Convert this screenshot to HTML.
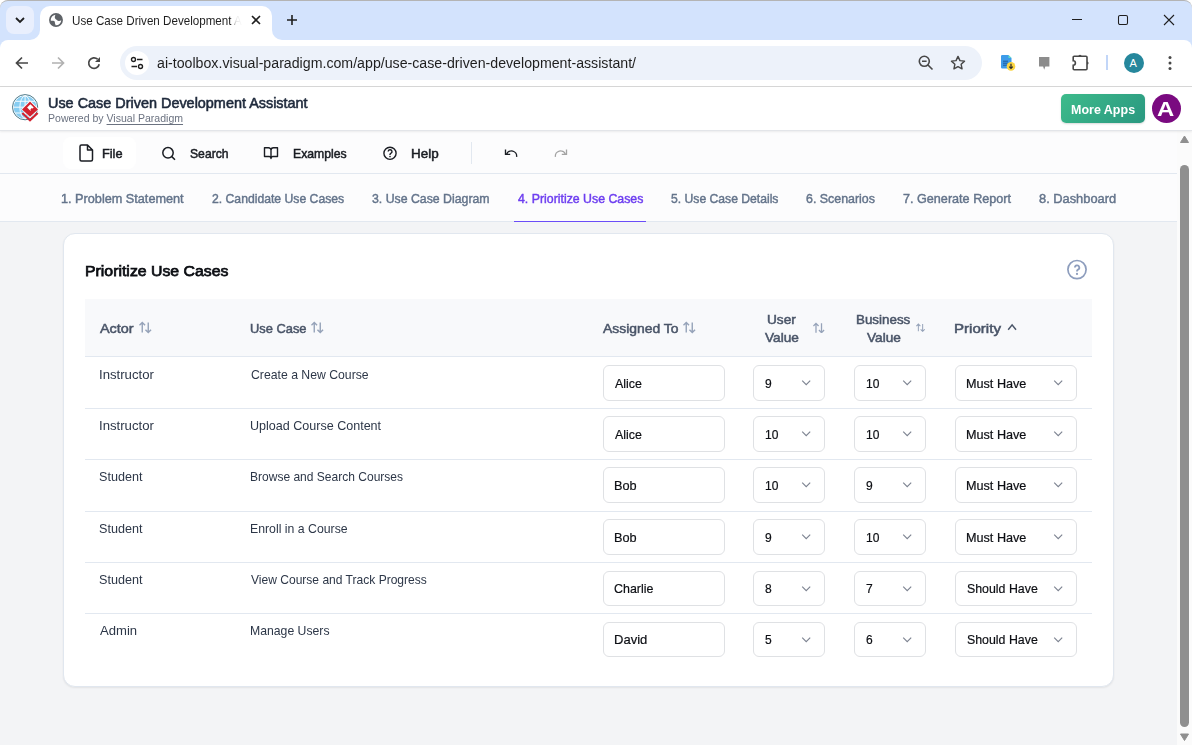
<!DOCTYPE html>
<html><head><meta charset="utf-8">
<style>
*{box-sizing:border-box;margin:0;padding:0}
html,body{width:1192px;height:745px;overflow:hidden;background:#fff;font-family:"Liberation Sans",sans-serif}
svg{display:block;position:absolute}
.t{position:absolute;white-space:nowrap;line-height:1}
.b{position:absolute}
.med{-webkit-text-stroke:0.25px currentColor}
</style></head>
<body>

<div class="b" style="left:0;top:0;width:1192px;height:50px;background:#d3e3fd;border-top:1px solid #b4b4b4;border-radius:8px 8px 0 0"></div>
<div class="b" style="left:40px;top:6px;width:232px;height:35px;background:#fff;border-radius:10px 10px 0 0"></div>
<svg style="left:49px;top:12.8px" width="14" height="14" viewBox="0 0 14 14"><g fill="#5f6368"><path d="M6.6 0.9C6.3 2.3 5.7 3.5 5.8 4.6 6 6 7.4 6.6 8.4 7.6 9.3 8.4 10.6 8 13.1 7A6.1 6.1 0 0 0 6.6 0.9z"/><path d="M0.95 8.2C2 7.6 4.3 7.6 5.4 8.2 6.3 8.8 5.6 10.1 6.2 11 6.8 11.8 6.4 12.5 6.2 13.05A6.1 6.1 0 0 1 0.95 8.2z"/></g><circle cx="7" cy="7" r="6.1" fill="none" stroke="#5f6368" stroke-width="1.7"/></svg>
<div class="t " style="left:71.93px;top:15px;font-size:12.6px;color:#1f1f1f;transform:scaleX(0.9225);transform-origin:0 0;width:216.8px;overflow:hidden;-webkit-mask-image:linear-gradient(to right,#000 172.4px,rgba(0,0,0,0.12) 177.8px,transparent 185.4px)">Use Case Driven Development A</div>
<svg style="left:250px;top:14px" width="12" height="12" viewBox="0 0 12 12"><path d="M2 2l8 8M10 2l-8 8" stroke="#1f1f1f" stroke-width="1.6"/></svg>
<svg style="left:286px;top:14px" width="12" height="12" viewBox="0 0 12 12"><path d="M6 1v10M1 6h10" stroke="#1f1f1f" stroke-width="1.6"/></svg>
<svg style="left:1070px;top:12px" width="14" height="14" viewBox="0 0 14 14"><path d="M2 7.5h10" stroke="#1f1f1f" stroke-width="1"/></svg>
<svg style="left:1116px;top:13px" width="14" height="14" viewBox="0 0 14 14"><rect x="2.5" y="2.5" width="9" height="9" rx="1.5" fill="none" stroke="#1f1f1f" stroke-width="1.05"/></svg>
<svg style="left:1162px;top:13px" width="14" height="14" viewBox="0 0 14 14"><path d="M2 2l10 10M12 2L2 12" stroke="#1f1f1f" stroke-width="1.1"/></svg>
<div class="b" style="left:0;top:40px;width:1192px;height:47px;background:#fff;border-bottom:1px solid #d7d7d7;border-radius:8px 8px 0 0"></div>
<div class="b" style="left:30px;top:30px;width:10px;height:10px;background:#fff"></div>
<div class="b" style="left:30px;top:30px;width:10px;height:10px;background:#d3e3fd;border-bottom-right-radius:10px"></div>
<div class="b" style="left:272px;top:30px;width:10px;height:10px;background:#fff"></div>
<div class="b" style="left:272px;top:30px;width:10px;height:10px;background:#d3e3fd;border-bottom-left-radius:10px"></div>
<div class="b" style="left:40px;top:36px;width:232px;height:6px;background:#fff"></div>
<div class="b" style="left:6px;top:6px;width:28px;height:28px;background:#e9effd;border-radius:8px"></div>
<svg style="left:14px;top:15px" width="12" height="10" viewBox="0 0 12 10"><path d="M2 3l4 4 4-4" fill="none" stroke="#1f1f1f" stroke-width="1.8"/></svg>
<svg style="left:14px;top:55px" width="16" height="16" viewBox="0 0 16 16"><path d="M14 8H3M8 2.5L2.5 8 8 13.5" fill="none" stroke="#474747" stroke-width="1.7"/></svg>
<svg style="left:50px;top:55px" width="16" height="16" viewBox="0 0 16 16"><path d="M2 8h11M8 2.5L13.5 8 8 13.5" fill="none" stroke="#b1b1b1" stroke-width="1.7"/></svg>
<svg style="left:86px;top:55px" width="16" height="16" viewBox="0 0 16 16"><path d="M13.2 9.2A5.3 5.3 0 1 1 11.6 4.2" fill="none" stroke="#474747" stroke-width="1.7"/><path d="M14 2v5h-5z" fill="#474747"/></svg>
<div class="b" style="left:120px;top:46px;width:862px;height:34px;border-radius:17px;background:#edf2fa"></div>
<div class="b" style="left:125px;top:51px;width:24px;height:24px;border-radius:12px;background:#fff"></div>
<svg style="left:130px;top:56px" width="14" height="14" viewBox="0 0 14 14"><circle cx="3.5" cy="3.5" r="2" fill="none" stroke="#1f1f1f" stroke-width="1.4"/><path d="M7 3.5h5.5M1.5 10.5H7" stroke="#1f1f1f" stroke-width="1.4"/><circle cx="10.5" cy="10.5" r="2" fill="none" stroke="#1f1f1f" stroke-width="1.4"/></svg>
<div class="t " style="left:156.83px;top:56px;font-size:14px;color:#1f1f1f;transform:scaleX(1.0125);transform-origin:0 0;">ai-toolbox.visual-paradigm.com/app/use-case-driven-development-assistant/</div>
<svg style="left:917px;top:54px" width="18" height="18" viewBox="0 0 18 18"><circle cx="7.3" cy="7.3" r="5" fill="none" stroke="#474747" stroke-width="1.6"/><path d="M5 7.3h4.6M11 11l4.5 4.5" stroke="#474747" stroke-width="1.6"/></svg>
<svg style="left:949px;top:54px" width="18" height="18" viewBox="0 0 24 24"><path d="M12 3.2l2.6 5.6 6.1.7-4.5 4.2 1.2 6.1L12 16.8l-5.4 3 1.2-6.1-4.5-4.2 6.1-.7z" fill="none" stroke="#474747" stroke-width="1.9" stroke-linejoin="round"/></svg>
<svg style="left:1000px;top:54px" width="17" height="18" viewBox="0 0 17 18"><path d="M2.2 1h6.3l3 3v9.3a1.2 1.2 0 0 1-1.2 1.2H2.2A1.2 1.2 0 0 1 1 13.3V2.2A1.2 1.2 0 0 1 2.2 1z" fill="#3d9be9"/><path d="M8.5 1l3 3h-3z" fill="#5fe0c6"/><path d="M3 7.2h5M3 9.2h5M3 11.2h4" stroke="#1c5a9e" stroke-width="1"/><circle cx="11" cy="12.4" r="4.3" fill="#fbd542"/><path d="M11 9.8v4.4M9.2 12.6l1.8 1.8 1.8-1.8" fill="none" stroke="#2b2b2b" stroke-width="1.2"/></svg>
<svg style="left:1038px;top:56px" width="13" height="15" viewBox="0 0 13 15"><path d="M1 1.1h10.4v9.3H7.3L6.2 13.7 5.1 10.4H1z" fill="#8c8c8c"/></svg>
<svg style="left:1071px;top:53px" width="20" height="19" viewBox="0 0 20 19"><path d="M3.2 3.3H15a1 1 0 0 1 1 1V15.7a1 1 0 0 1-1 1H3.2a1 1 0 0 1-1-1V12.2a2.2 2.2 0 0 0 0-4.4V4.3a1 1 0 0 1 1-1z" fill="none" stroke="#474747" stroke-width="1.6"/><path d="M7.4 3.3a1.6 1.6 0 0 1 3.2 0z" fill="#474747"/><path d="M16 8.4a1.6 1.6 0 0 1 0 3.2z" fill="#474747"/></svg>
<div class="b" style="left:1106px;top:55px;width:2px;height:15px;background:#c2d6f8"></div>
<div class="b" style="left:1124px;top:53px;width:20px;height:20px;border-radius:10px;background:#26879c"></div>
<div class="t " style="left:1129.50px;top:58px;font-size:11px;color:#fff;">A</div>
<svg style="left:1166px;top:54px" width="8" height="18" viewBox="0 0 8 18"><circle cx="4" cy="3.4" r="1.5" fill="#474747"/><circle cx="4" cy="9" r="1.5" fill="#474747"/><circle cx="4" cy="14.5" r="1.5" fill="#474747"/></svg>
<div class="b" style="left:0;top:87px;width:1192px;height:44px;background:#fff;border-bottom:1px solid #e3e5e9;box-shadow:0 1px 2px rgba(0,0,0,0.07);z-index:3"></div>
<svg style="left:11px;top:93px;z-index:4" width="30" height="31" viewBox="0 0 30 31">
<circle cx="14.1" cy="14.2" r="12.6" fill="#fff" stroke="#4b7888" stroke-width="1"/>
<circle cx="14.1" cy="14.2" r="11.3" fill="#86cdf2"/>
<path d="M2.8 14.2h22.6M4.2 8.3h19.8M4.2 20h19.8M14.1 2.9v22.6" stroke="#f4fbff" stroke-width="1"/>
<ellipse cx="14.1" cy="14.2" rx="5.2" ry="11.3" fill="none" stroke="#f4fbff" stroke-width="1"/>
<path d="M19 7.3l9 9-9 8.5-9-8.5z" fill="#fff"/>
<path d="M19 8.5l8 7.9-8 7.4-8-7.4z" fill="#d3222f"/>
<path d="M19.4 11.2l3.3 3.3-3.3 3.3-3.3-3.3z" fill="#fff"/>
<path d="M20.9 14.9l1.7 1.6-1.7 1.6-1.6-1.6z" fill="#d3222f"/>
<path d="M11.3 20l7.7 7.2 7.7-7.2" fill="none" stroke="#d3222f" stroke-width="2.1"/>
</svg>
<div class="t " style="left:47.62px;top:97px;font-size:13.9px;color:#1e293b;transform:scaleX(1.0379);transform-origin:0 0;-webkit-text-stroke:0.55px #1e293b;z-index:4">Use Case Driven Development Assistant</div>
<div class="t " style="left:47.86px;top:113px;font-size:10.6px;color:#6b7280;transform:scaleX(0.9940);transform-origin:0 0;z-index:4">Powered by <span style="text-decoration:underline;text-underline-offset:1.5px">Visual Paradigm</span></div>
<div class="b" style="left:1061px;top:94px;width:84px;height:29px;border-radius:5px;background:linear-gradient(135deg,#3dbb8b,#2a9880);box-shadow:0 1px 2px rgba(0,0,0,0.15);z-index:4"></div>
<div class="t " style="left:1071.19px;top:104px;font-size:12.6px;color:#fff;font-weight:bold;transform:scaleX(0.9919);transform-origin:0 0;z-index:4">More Apps</div>
<div class="b" style="left:1152px;top:94px;width:29px;height:29px;border-radius:50%;background:#7a0a80;z-index:4"></div>
<div class="t " style="left:1157.40px;top:100px;font-size:19.5px;color:#fff;font-weight:bold;transform:scaleX(1.2246);transform-origin:0 0;z-index:4">A</div>
<div class="b" style="left:0;top:131px;width:1192px;height:614px;background:#f3f4f6"></div>
<div class="b" style="left:0;top:131px;width:1177px;height:43px;background:#fcfcfd;border-bottom:1px solid #e2e8f0"></div>
<div class="b" style="left:63px;top:137px;width:73px;height:32px;background:#fff;border-radius:8px"></div>
<svg style="left:78px;top:144px" width="16" height="18" viewBox="0 0 16 18"><path d="M2 2.5a1.5 1.5 0 0 1 1.5-1.5H9.5L14.5 6v9.5a1.5 1.5 0 0 1-1.5 1.5H3.5A1.5 1.5 0 0 1 2 15.5z M9.5 1v5h5" fill="none" stroke="#1a1d23" stroke-width="1.5" stroke-linejoin="round"/></svg>
<div class="t " style="left:102.28px;top:148px;font-size:12.8px;color:#1a1d23;transform:scaleX(0.9962);transform-origin:0 0;-webkit-text-stroke:0.5px #1a1d23;">File</div>
<svg style="left:161px;top:146px" width="16" height="15" viewBox="0 0 16 15"><circle cx="7" cy="6.8" r="5.2" fill="none" stroke="#1a1d23" stroke-width="1.5"/><path d="M10.8 10.6l3.2 3.2" stroke="#1a1d23" stroke-width="1.5"/></svg>
<div class="t " style="left:190.35px;top:148px;font-size:12.8px;color:#1a1d23;transform:scaleX(0.9513);transform-origin:0 0;-webkit-text-stroke:0.5px #1a1d23;">Search</div>
<svg style="left:263px;top:146px" width="16" height="14" viewBox="0 0 16 14"><path d="M1.5 1.8h4a2.5 2.5 0 0 1 2.5 2.5v8.2a2 2 0 0 0-2-2h-4.5z M14.5 1.8h-4a2.5 2.5 0 0 0-2.5 2.5v8.2a2 2 0 0 1 2-2h4.5z" fill="none" stroke="#1a1d23" stroke-width="1.4" stroke-linejoin="round"/></svg>
<div class="t " style="left:293.02px;top:148px;font-size:12.8px;color:#1a1d23;transform:scaleX(0.9558);transform-origin:0 0;-webkit-text-stroke:0.5px #1a1d23;">Examples</div>
<svg style="left:382px;top:146px" width="16" height="15" viewBox="0 0 16 15"><circle cx="8" cy="7.3" r="6.1" fill="none" stroke="#1a1d23" stroke-width="1.4"/><path d="M6.2 5.6a1.9 1.9 0 1 1 2.6 1.8c-.5.2-.8.6-.8 1.1v.6" fill="none" stroke="#1a1d23" stroke-width="1.4"/><circle cx="8" cy="10.6" r="0.8" fill="#1a1d23"/></svg>
<div class="t " style="left:410.93px;top:148px;font-size:12.8px;color:#1a1d23;transform:scaleX(1.0497);transform-origin:0 0;-webkit-text-stroke:0.5px #1a1d23;">Help</div>
<div class="b" style="left:471px;top:142px;width:1px;height:22px;background:#e2e8f0"></div>
<svg style="left:503px;top:146px" width="16" height="14" viewBox="0 0 16 14"><path d="M3.6 8.2a5.2 5.2 0 0 1 10 2.6" fill="none" stroke="#1a1d23" stroke-width="1.35"/><path d="M2.5 3.6v4.7h4.7" fill="none" stroke="#1a1d23" stroke-width="1.35"/></svg>
<svg style="left:553px;top:146px" width="16" height="14" viewBox="0 0 16 14"><path d="M12.4 8.2a5.2 5.2 0 0 0-10 2.6" fill="none" stroke="#a3a3a3" stroke-width="1.3"/><path d="M13.5 3.6v4.7H8.8" fill="none" stroke="#a3a3a3" stroke-width="1.3"/></svg>
<div class="b" style="left:0;top:174px;width:1177px;height:48px;background:#fcfcfd;border-bottom:1px solid #e2e8f0"></div>
<div class="t " style="left:60.55px;top:192px;font-size:13px;color:#64748b;transform:scaleX(0.9754);transform-origin:0 0;-webkit-text-stroke:0.45px #64748b;">1. Problem Statement</div>
<div class="t " style="left:211.69px;top:192px;font-size:13px;color:#64748b;transform:scaleX(0.9377);transform-origin:0 0;-webkit-text-stroke:0.45px #64748b;">2. Candidate Use Cases</div>
<div class="t " style="left:372.11px;top:192px;font-size:13px;color:#64748b;transform:scaleX(0.9462);transform-origin:0 0;-webkit-text-stroke:0.45px #64748b;">3. Use Case Diagram</div>
<div class="t " style="left:517.75px;top:192px;font-size:13px;color:#6d3ef0;transform:scaleX(0.9483);transform-origin:0 0;-webkit-text-stroke:0.45px #6d3ef0;">4. Prioritize Use Cases</div>
<div class="t " style="left:671.31px;top:192px;font-size:13px;color:#64748b;transform:scaleX(0.9352);transform-origin:0 0;-webkit-text-stroke:0.45px #64748b;">5. Use Case Details</div>
<div class="t " style="left:806.38px;top:192px;font-size:13px;color:#64748b;transform:scaleX(0.9540);transform-origin:0 0;-webkit-text-stroke:0.45px #64748b;">6. Scenarios</div>
<div class="t " style="left:903.07px;top:192px;font-size:13px;color:#64748b;transform:scaleX(0.9705);transform-origin:0 0;-webkit-text-stroke:0.45px #64748b;">7. Generate Report</div>
<div class="t " style="left:1039.12px;top:192px;font-size:13px;color:#64748b;transform:scaleX(0.9878);transform-origin:0 0;-webkit-text-stroke:0.45px #64748b;">8. Dashboard</div>
<div class="b" style="left:514px;top:221px;width:132px;height:1px;background:#6a4cf8"></div>
<div class="b" style="left:63px;top:233px;width:1051px;height:454px;background:#fff;border:1px solid #e1e7ef;border-radius:12px;box-shadow:0 1px 2px rgba(0,0,0,0.07)"></div>
<div class="t " style="left:84.73px;top:263px;font-size:15.2px;color:#0b0d12;transform:scaleX(1.0429);transform-origin:0 0;-webkit-text-stroke:0.75px #0b0d12;">Prioritize Use Cases</div>
<svg style="left:1066px;top:259px" width="22" height="22" viewBox="0 0 22 22"><circle cx="11" cy="10.6" r="9.1" fill="none" stroke="#8d9dbd" stroke-width="1.7"/><path d="M8.9 8.6a2.2 2.2 0 1 1 3.1 2c-.6.3-1 .7-1 1.3v.6" fill="none" stroke="#8d9dbd" stroke-width="1.8"/><circle cx="11" cy="14.9" r="1.1" fill="#8d9dbd"/></svg>
<div class="b" style="left:85px;top:299px;width:1007px;height:58px;background:#f8f9fb;border-bottom:1px solid #e2e8f0"></div>
<div class="t " style="left:100.00px;top:323px;font-size:12.8px;color:#4a5568;transform:scaleX(1.1272);transform-origin:0 0;-webkit-text-stroke:0.5px #4a5568;">Actor</div>
<svg style="left:139px;top:321px" width="12.50" height="12.50" viewBox="0 0 12.5 12.5"><path d="M3.25 11.6V1.4M0.45 4.3l2.8-2.85 2.8 2.85M9.25 1.4v10.2M6.45 8.75l2.8 2.85 2.8-2.85" fill="none" stroke="#96a3b9" stroke-width="1.4"/></svg>
<div class="t " style="left:250.24px;top:323px;font-size:12.8px;color:#4a5568;transform:scaleX(1.0051);transform-origin:0 0;-webkit-text-stroke:0.5px #4a5568;">Use Case</div>
<svg style="left:311px;top:321px" width="12.50" height="12.50" viewBox="0 0 12.5 12.5"><path d="M3.25 11.6V1.4M0.45 4.3l2.8-2.85 2.8 2.85M9.25 1.4v10.2M6.45 8.75l2.8 2.85 2.8-2.85" fill="none" stroke="#96a3b9" stroke-width="1.4"/></svg>
<div class="t " style="left:602.70px;top:323px;font-size:12.8px;color:#4a5568;transform:scaleX(1.0856);transform-origin:0 0;-webkit-text-stroke:0.5px #4a5568;">Assigned To</div>
<svg style="left:683px;top:321px" width="12.50" height="12.50" viewBox="0 0 12.5 12.5"><path d="M3.25 11.6V1.4M0.45 4.3l2.8-2.85 2.8 2.85M9.25 1.4v10.2M6.45 8.75l2.8 2.85 2.8-2.85" fill="none" stroke="#96a3b9" stroke-width="1.4"/></svg>
<div class="t " style="left:766.68px;top:314px;font-size:12.8px;color:#4a5568;transform:scaleX(1.0675);transform-origin:0 0;-webkit-text-stroke:0.5px #4a5568;">User</div>
<div class="t " style="left:765.03px;top:332px;font-size:12.8px;color:#4a5568;transform:scaleX(1.0652);transform-origin:0 0;-webkit-text-stroke:0.5px #4a5568;">Value</div>
<svg style="left:813px;top:321.5px" width="11.50" height="11.50" viewBox="0 0 12.5 12.5"><path d="M3.25 11.6V1.4M0.45 4.3l2.8-2.85 2.8 2.85M9.25 1.4v10.2M6.45 8.75l2.8 2.85 2.8-2.85" fill="none" stroke="#96a3b9" stroke-width="1.4"/></svg>
<div class="t " style="left:856.33px;top:314px;font-size:12.8px;color:#4a5568;transform:scaleX(1.0456);transform-origin:0 0;-webkit-text-stroke:0.5px #4a5568;">Business</div>
<div class="t " style="left:867.23px;top:332px;font-size:12.8px;color:#4a5568;transform:scaleX(1.0652);transform-origin:0 0;-webkit-text-stroke:0.5px #4a5568;">Value</div>
<svg style="left:916px;top:322.5px" width="9.00" height="9.00" viewBox="0 0 12.5 12.5"><path d="M3.25 11.6V1.4M0.45 4.3l2.8-2.85 2.8 2.85M9.25 1.4v10.2M6.45 8.75l2.8 2.85 2.8-2.85" fill="none" stroke="#96a3b9" stroke-width="1.4"/></svg>
<div class="t " style="left:954.29px;top:323px;font-size:12.8px;color:#4a5568;transform:scaleX(1.1783);transform-origin:0 0;-webkit-text-stroke:0.5px #4a5568;">Priority</div>
<svg style="left:1006px;top:321px" width="12" height="12" viewBox="0 0 12 12"><path d="M2.2 8.8l3.9-4.9 3.9 4.9" fill="none" stroke="#4a5568" stroke-width="1.5"/></svg>
<div class="t " style="left:98.81px;top:369px;font-size:12.8px;color:#2d3748;transform:scaleX(1.0295);transform-origin:0 0;">Instructor</div>
<div class="t " style="left:250.59px;top:369px;font-size:12.8px;color:#2d3748;transform:scaleX(0.9564);transform-origin:0 0;">Create a New Course</div>
<div class="b" style="left:603px;top:365.00px;width:122px;height:35.6px;border:1px solid #dfe1e4;border-radius:6px;background:#fff"></div>
<div class="t " style="left:614.70px;top:378px;font-size:12.8px;color:#0d0f14;transform:scaleX(0.9669);transform-origin:0 0;-webkit-text-stroke:0.2px #0d0f14;">Alice</div>
<div class="b" style="left:753px;top:365.00px;width:72px;height:35.6px;border:1px solid #dfe1e4;border-radius:6px;background:#fff"></div>
<div class="t " style="left:764.96px;top:378px;font-size:12.8px;color:#0d0f14;transform:scaleX(0.9400);transform-origin:0 0;-webkit-text-stroke:0.2px #0d0f14;">9</div>
<svg style="left:800px;top:379.00px" width="12" height="8" viewBox="0 0 12 8"><path d="M2.2 1.6l4 4 4-4" fill="none" stroke="#7d8391" stroke-width="1.15"/></svg>
<div class="b" style="left:854px;top:365.00px;width:72px;height:35.6px;border:1px solid #dfe1e4;border-radius:6px;background:#fff"></div>
<div class="t " style="left:865.60px;top:378px;font-size:12.8px;color:#0d0f14;transform:scaleX(0.9400);transform-origin:0 0;-webkit-text-stroke:0.2px #0d0f14;">10</div>
<svg style="left:901px;top:379.00px" width="12" height="8" viewBox="0 0 12 8"><path d="M2.2 1.6l4 4 4-4" fill="none" stroke="#7d8391" stroke-width="1.15"/></svg>
<div class="b" style="left:955px;top:365.00px;width:122px;height:35.6px;border:1px solid #dfe1e4;border-radius:6px;background:#fff"></div>
<div class="t " style="left:966.49px;top:378px;font-size:12.8px;color:#0d0f14;transform:scaleX(0.9875);transform-origin:0 0;-webkit-text-stroke:0.2px #0d0f14;">Must Have</div>
<svg style="left:1052px;top:379.00px" width="12" height="8" viewBox="0 0 12 8"><path d="M2.2 1.6l4 4 4-4" fill="none" stroke="#7d8391" stroke-width="1.15"/></svg>
<div class="b" style="left:85px;top:408.30px;width:1007px;height:1px;background:#e2e8f0"></div>
<div class="t " style="left:98.81px;top:420px;font-size:12.8px;color:#2d3748;transform:scaleX(1.0295);transform-origin:0 0;">Instructor</div>
<div class="t " style="left:250.26px;top:420px;font-size:12.8px;color:#2d3748;transform:scaleX(0.9801);transform-origin:0 0;">Upload Course Content</div>
<div class="b" style="left:603px;top:416.20px;width:122px;height:35.6px;border:1px solid #dfe1e4;border-radius:6px;background:#fff"></div>
<div class="t " style="left:614.70px;top:429px;font-size:12.8px;color:#0d0f14;transform:scaleX(0.9669);transform-origin:0 0;-webkit-text-stroke:0.2px #0d0f14;">Alice</div>
<div class="b" style="left:753px;top:416.20px;width:72px;height:35.6px;border:1px solid #dfe1e4;border-radius:6px;background:#fff"></div>
<div class="t " style="left:764.60px;top:429px;font-size:12.8px;color:#0d0f14;transform:scaleX(0.9400);transform-origin:0 0;-webkit-text-stroke:0.2px #0d0f14;">10</div>
<svg style="left:800px;top:430.20px" width="12" height="8" viewBox="0 0 12 8"><path d="M2.2 1.6l4 4 4-4" fill="none" stroke="#7d8391" stroke-width="1.15"/></svg>
<div class="b" style="left:854px;top:416.20px;width:72px;height:35.6px;border:1px solid #dfe1e4;border-radius:6px;background:#fff"></div>
<div class="t " style="left:865.60px;top:429px;font-size:12.8px;color:#0d0f14;transform:scaleX(0.9400);transform-origin:0 0;-webkit-text-stroke:0.2px #0d0f14;">10</div>
<svg style="left:901px;top:430.20px" width="12" height="8" viewBox="0 0 12 8"><path d="M2.2 1.6l4 4 4-4" fill="none" stroke="#7d8391" stroke-width="1.15"/></svg>
<div class="b" style="left:955px;top:416.20px;width:122px;height:35.6px;border:1px solid #dfe1e4;border-radius:6px;background:#fff"></div>
<div class="t " style="left:966.49px;top:429px;font-size:12.8px;color:#0d0f14;transform:scaleX(0.9875);transform-origin:0 0;-webkit-text-stroke:0.2px #0d0f14;">Must Have</div>
<svg style="left:1052px;top:430.20px" width="12" height="8" viewBox="0 0 12 8"><path d="M2.2 1.6l4 4 4-4" fill="none" stroke="#7d8391" stroke-width="1.15"/></svg>
<div class="b" style="left:85px;top:459.40px;width:1007px;height:1px;background:#e2e8f0"></div>
<div class="t " style="left:99.43px;top:471px;font-size:12.8px;color:#2d3748;transform:scaleX(0.9849);transform-origin:0 0;">Student</div>
<div class="t " style="left:250.24px;top:471px;font-size:12.8px;color:#2d3748;transform:scaleX(0.9395);transform-origin:0 0;">Browse and Search Courses</div>
<div class="b" style="left:603px;top:467.40px;width:122px;height:35.6px;border:1px solid #dfe1e4;border-radius:6px;background:#fff"></div>
<div class="t " style="left:613.68px;top:480px;font-size:12.8px;color:#0d0f14;transform:scaleX(0.9930);transform-origin:0 0;-webkit-text-stroke:0.2px #0d0f14;">Bob</div>
<div class="b" style="left:753px;top:467.40px;width:72px;height:35.6px;border:1px solid #dfe1e4;border-radius:6px;background:#fff"></div>
<div class="t " style="left:764.60px;top:480px;font-size:12.8px;color:#0d0f14;transform:scaleX(0.9400);transform-origin:0 0;-webkit-text-stroke:0.2px #0d0f14;">10</div>
<svg style="left:800px;top:481.40px" width="12" height="8" viewBox="0 0 12 8"><path d="M2.2 1.6l4 4 4-4" fill="none" stroke="#7d8391" stroke-width="1.15"/></svg>
<div class="b" style="left:854px;top:467.40px;width:72px;height:35.6px;border:1px solid #dfe1e4;border-radius:6px;background:#fff"></div>
<div class="t " style="left:865.96px;top:480px;font-size:12.8px;color:#0d0f14;transform:scaleX(0.9400);transform-origin:0 0;-webkit-text-stroke:0.2px #0d0f14;">9</div>
<svg style="left:901px;top:481.40px" width="12" height="8" viewBox="0 0 12 8"><path d="M2.2 1.6l4 4 4-4" fill="none" stroke="#7d8391" stroke-width="1.15"/></svg>
<div class="b" style="left:955px;top:467.40px;width:122px;height:35.6px;border:1px solid #dfe1e4;border-radius:6px;background:#fff"></div>
<div class="t " style="left:966.49px;top:480px;font-size:12.8px;color:#0d0f14;transform:scaleX(0.9875);transform-origin:0 0;-webkit-text-stroke:0.2px #0d0f14;">Must Have</div>
<svg style="left:1052px;top:481.40px" width="12" height="8" viewBox="0 0 12 8"><path d="M2.2 1.6l4 4 4-4" fill="none" stroke="#7d8391" stroke-width="1.15"/></svg>
<div class="b" style="left:85px;top:511.30px;width:1007px;height:1px;background:#e2e8f0"></div>
<div class="t " style="left:99.43px;top:523px;font-size:12.8px;color:#2d3748;transform:scaleX(0.9849);transform-origin:0 0;">Student</div>
<div class="t " style="left:250.22px;top:523px;font-size:12.8px;color:#2d3748;transform:scaleX(0.9595);transform-origin:0 0;">Enroll in a Course</div>
<div class="b" style="left:603px;top:519.40px;width:122px;height:35.6px;border:1px solid #dfe1e4;border-radius:6px;background:#fff"></div>
<div class="t " style="left:613.68px;top:532px;font-size:12.8px;color:#0d0f14;transform:scaleX(0.9930);transform-origin:0 0;-webkit-text-stroke:0.2px #0d0f14;">Bob</div>
<div class="b" style="left:753px;top:519.40px;width:72px;height:35.6px;border:1px solid #dfe1e4;border-radius:6px;background:#fff"></div>
<div class="t " style="left:764.96px;top:532px;font-size:12.8px;color:#0d0f14;transform:scaleX(0.9400);transform-origin:0 0;-webkit-text-stroke:0.2px #0d0f14;">9</div>
<svg style="left:800px;top:533.40px" width="12" height="8" viewBox="0 0 12 8"><path d="M2.2 1.6l4 4 4-4" fill="none" stroke="#7d8391" stroke-width="1.15"/></svg>
<div class="b" style="left:854px;top:519.40px;width:72px;height:35.6px;border:1px solid #dfe1e4;border-radius:6px;background:#fff"></div>
<div class="t " style="left:865.60px;top:532px;font-size:12.8px;color:#0d0f14;transform:scaleX(0.9400);transform-origin:0 0;-webkit-text-stroke:0.2px #0d0f14;">10</div>
<svg style="left:901px;top:533.40px" width="12" height="8" viewBox="0 0 12 8"><path d="M2.2 1.6l4 4 4-4" fill="none" stroke="#7d8391" stroke-width="1.15"/></svg>
<div class="b" style="left:955px;top:519.40px;width:122px;height:35.6px;border:1px solid #dfe1e4;border-radius:6px;background:#fff"></div>
<div class="t " style="left:966.49px;top:532px;font-size:12.8px;color:#0d0f14;transform:scaleX(0.9875);transform-origin:0 0;-webkit-text-stroke:0.2px #0d0f14;">Must Have</div>
<svg style="left:1052px;top:533.40px" width="12" height="8" viewBox="0 0 12 8"><path d="M2.2 1.6l4 4 4-4" fill="none" stroke="#7d8391" stroke-width="1.15"/></svg>
<div class="b" style="left:85px;top:562.40px;width:1007px;height:1px;background:#e2e8f0"></div>
<div class="t " style="left:99.43px;top:574px;font-size:12.8px;color:#2d3748;transform:scaleX(0.9849);transform-origin:0 0;">Student</div>
<div class="t " style="left:251.14px;top:574px;font-size:12.8px;color:#2d3748;transform:scaleX(0.9411);transform-origin:0 0;">View Course and Track Progress</div>
<div class="b" style="left:603px;top:570.60px;width:122px;height:35.6px;border:1px solid #dfe1e4;border-radius:6px;background:#fff"></div>
<div class="t " style="left:614.08px;top:583px;font-size:12.8px;color:#0d0f14;transform:scaleX(0.9705);transform-origin:0 0;-webkit-text-stroke:0.2px #0d0f14;">Charlie</div>
<div class="b" style="left:753px;top:570.60px;width:72px;height:35.6px;border:1px solid #dfe1e4;border-radius:6px;background:#fff"></div>
<div class="t " style="left:764.96px;top:583px;font-size:12.8px;color:#0d0f14;transform:scaleX(0.9400);transform-origin:0 0;-webkit-text-stroke:0.2px #0d0f14;">8</div>
<svg style="left:800px;top:584.60px" width="12" height="8" viewBox="0 0 12 8"><path d="M2.2 1.6l4 4 4-4" fill="none" stroke="#7d8391" stroke-width="1.15"/></svg>
<div class="b" style="left:854px;top:570.60px;width:72px;height:35.6px;border:1px solid #dfe1e4;border-radius:6px;background:#fff"></div>
<div class="t " style="left:865.90px;top:583px;font-size:12.8px;color:#0d0f14;transform:scaleX(0.9400);transform-origin:0 0;-webkit-text-stroke:0.2px #0d0f14;">7</div>
<svg style="left:901px;top:584.60px" width="12" height="8" viewBox="0 0 12 8"><path d="M2.2 1.6l4 4 4-4" fill="none" stroke="#7d8391" stroke-width="1.15"/></svg>
<div class="b" style="left:955px;top:570.60px;width:122px;height:35.6px;border:1px solid #dfe1e4;border-radius:6px;background:#fff"></div>
<div class="t " style="left:966.94px;top:583px;font-size:12.8px;color:#0d0f14;transform:scaleX(0.9655);transform-origin:0 0;-webkit-text-stroke:0.2px #0d0f14;">Should Have</div>
<svg style="left:1052px;top:584.60px" width="12" height="8" viewBox="0 0 12 8"><path d="M2.2 1.6l4 4 4-4" fill="none" stroke="#7d8391" stroke-width="1.15"/></svg>
<div class="b" style="left:85px;top:613.40px;width:1007px;height:1px;background:#e2e8f0"></div>
<div class="t " style="left:100.00px;top:625px;font-size:12.8px;color:#2d3748;transform:scaleX(1.0238);transform-origin:0 0;">Admin</div>
<div class="t " style="left:250.22px;top:625px;font-size:12.8px;color:#2d3748;transform:scaleX(0.9561);transform-origin:0 0;">Manage Users</div>
<div class="b" style="left:603px;top:621.80px;width:122px;height:35.6px;border:1px solid #dfe1e4;border-radius:6px;background:#fff"></div>
<div class="t " style="left:613.66px;top:634px;font-size:12.8px;color:#0d0f14;transform:scaleX(1.0179);transform-origin:0 0;-webkit-text-stroke:0.2px #0d0f14;">David</div>
<div class="b" style="left:753px;top:621.80px;width:72px;height:35.6px;border:1px solid #dfe1e4;border-radius:6px;background:#fff"></div>
<div class="t " style="left:765.02px;top:634px;font-size:12.8px;color:#0d0f14;transform:scaleX(0.9400);transform-origin:0 0;-webkit-text-stroke:0.2px #0d0f14;">5</div>
<svg style="left:800px;top:635.80px" width="12" height="8" viewBox="0 0 12 8"><path d="M2.2 1.6l4 4 4-4" fill="none" stroke="#7d8391" stroke-width="1.15"/></svg>
<div class="b" style="left:854px;top:621.80px;width:72px;height:35.6px;border:1px solid #dfe1e4;border-radius:6px;background:#fff"></div>
<div class="t " style="left:865.90px;top:634px;font-size:12.8px;color:#0d0f14;transform:scaleX(0.9400);transform-origin:0 0;-webkit-text-stroke:0.2px #0d0f14;">6</div>
<svg style="left:901px;top:635.80px" width="12" height="8" viewBox="0 0 12 8"><path d="M2.2 1.6l4 4 4-4" fill="none" stroke="#7d8391" stroke-width="1.15"/></svg>
<div class="b" style="left:955px;top:621.80px;width:122px;height:35.6px;border:1px solid #dfe1e4;border-radius:6px;background:#fff"></div>
<div class="t " style="left:966.94px;top:634px;font-size:12.8px;color:#0d0f14;transform:scaleX(0.9655);transform-origin:0 0;-webkit-text-stroke:0.2px #0d0f14;">Should Have</div>
<svg style="left:1052px;top:635.80px" width="12" height="8" viewBox="0 0 12 8"><path d="M2.2 1.6l4 4 4-4" fill="none" stroke="#7d8391" stroke-width="1.15"/></svg>
<div class="b" style="left:1177px;top:131px;width:15px;height:614px;background:#fbfbfb"></div>
<svg style="left:1177px;top:131px" width="15" height="15" viewBox="0 0 15 15"><path d="M3.5 11.5L7.5 5l4 6.5z" fill="#8f8f8f" stroke="#8f8f8f" stroke-width="1" stroke-linejoin="round"/></svg>
<div class="b" style="left:1180px;top:165px;width:9px;height:562px;border-radius:4.5px;background:#8f8f8f"></div>
<svg style="left:1177px;top:730px" width="15" height="15" viewBox="0 0 15 15"><path d="M3.5 4L7.5 10.5l4-6.5z" fill="#8f8f8f" stroke="#8f8f8f" stroke-width="1" stroke-linejoin="round"/></svg>
</body></html>
